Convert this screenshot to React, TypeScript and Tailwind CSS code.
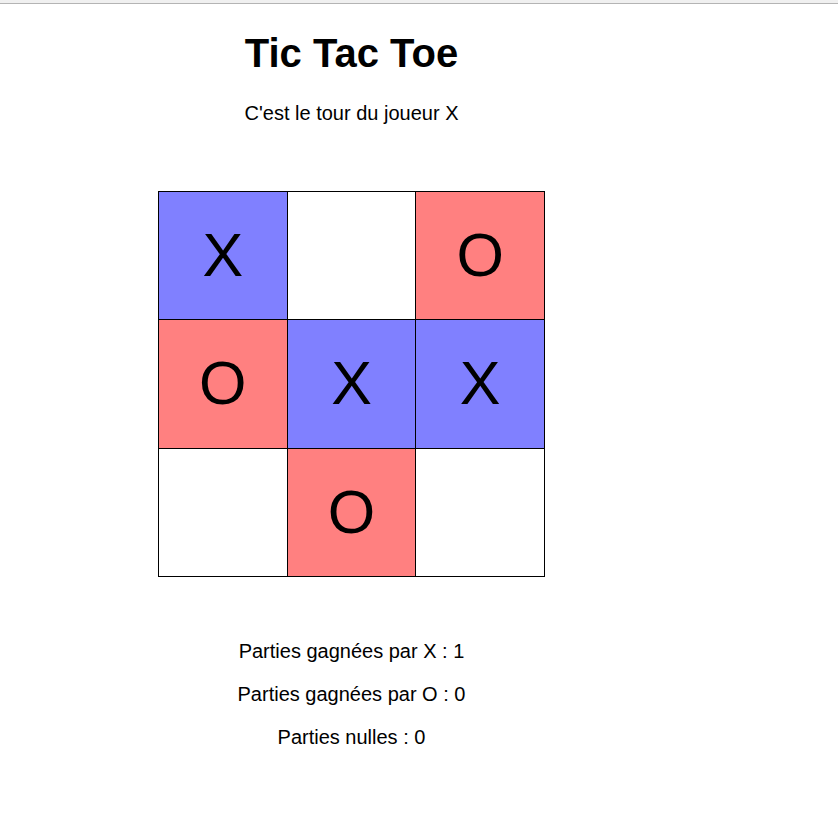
const board: ("X" | "O" | null)[] = ["X", null, "O", "O", "X", "X", null, "O", null];

const stats = [
  "Parties gagnées par X : 1",
  "Parties gagnées par O : 0",
  "Parties nulles : 0",
];

export default function App() {
  return (
    <div className="min-h-[830px] bg-white font-['Liberation_Sans',Arial,sans-serif] text-black">
      <div className="h-[3px] bg-[#f0f0f0]" />
      <div className="h-px bg-[#b4b4b4]" />
      <div className="w-[703px] flex flex-col items-center">
        <h1 className="mt-[26px] text-[40px] leading-[46px] font-bold">Tic Tac Toe</h1>
        <p className="mt-[26px] text-[20px] leading-[23px]">C'est le tour du joueur X</p>
        <div className="mt-[66px] grid grid-cols-3 grid-rows-3 gap-px p-px bg-black w-[387px] h-[386px]">
          {board.map((v, i) => (
            <div
              key={i}
              className={
                "flex items-center justify-center text-[61px] leading-none " +
                (v === "X" ? "bg-[#8080ff]" : v === "O" ? "bg-[#ff8080]" : "bg-white")
              }
            >
              {v}
            </div>
          ))}
        </div>
        <div className="mt-[63px] flex flex-col items-center gap-5">
          {stats.map((s) => (
            <p key={s} className="text-[20px] leading-[23px]">
              {s}
            </p>
          ))}
        </div>
      </div>
    </div>
  );
}
